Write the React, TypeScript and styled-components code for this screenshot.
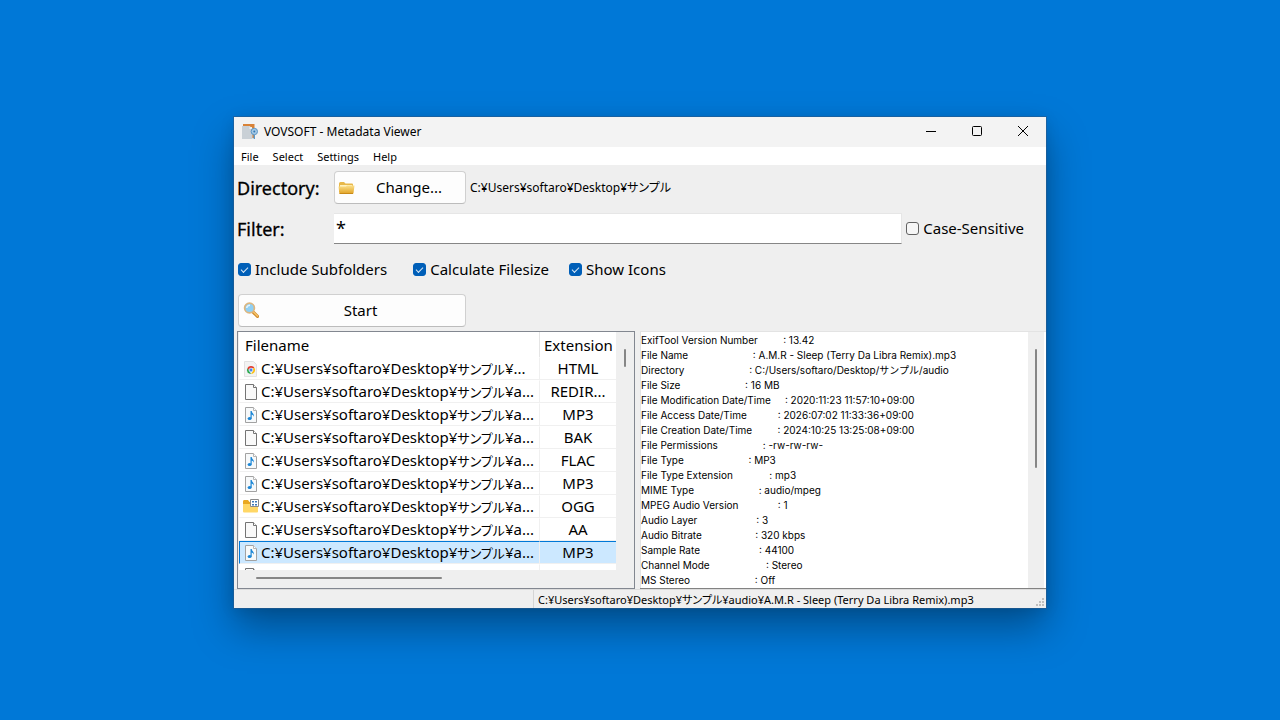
import React from "react";
import styled, { createGlobalStyle } from "styled-components";

const UI = `"Noto Sans", "Noto Sans CJK JP", sans-serif`;
const MEMO = `Inter, "Noto Sans CJK JP", sans-serif`;

const GlobalStyle = createGlobalStyle`
  *, *::before, *::after { box-sizing: border-box; }
  body { margin: 0; background: #0078d7; color: #000; }
  button, input, textarea { font: inherit; color: inherit; margin: 0; }
  svg { flex: none; }
`;

const Desktop = styled.div`
  min-height: 100vh;
  display: flex;
  padding: 117px 234px 112px;
  background: #0078d7;
`;

const AppWindow = styled.main`
  flex: 1;
  min-width: 0;
  display: flex;
  flex-direction: column;
  background: #efefef;
  font: 15px/22px ${UI};
  font-feature-settings: "palt";
  box-shadow: 0 0 0 1px rgba(40, 90, 140, 0.6), 0 20px 38px rgba(0, 0, 0, 0.34),
    0 2px 14px rgba(0, 0, 0, 0.1);
`;

const TitleBar = styled.header`
  display: flex;
  align-items: center;
  height: 30px;
  padding-left: 8px;
  background: #f3f3f3;
  font-size: 12px;
  line-height: 16px;
`;

const Title = styled.h1`
  flex: 1;
  margin: 0 0 0 6px;
  font: inherit;
`;

const CaptionButton = styled.button`
  display: grid;
  place-items: center;
  width: 46px;
  height: 30px;
  padding: 0 0 2px;
  border: 0;
  background: none;
`;

const MenuBar = styled.nav`
  display: flex;
  height: 18px;
  background: #fff;
  font-size: 11px;
  line-height: 20px;
`;

const MenuItem = styled.button`
  padding: 0 7px;
  border: 0;
  background: none;
`;

const Form = styled.form`
  display: flex;
  flex-direction: column;
  padding: 6px 4px 4px 3px;
`;

const Row = styled.div<{ $height?: number }>`
  display: flex;
  align-items: center;
  height: ${(p) => p.$height ?? 33}px;
`;

const IndentedRow = styled(Row)`
  padding-left: 1px;
  & + & {
    margin-top: 8px;
  }
`;

const FieldLabel = styled.label`
  width: 97px;
  font-size: 18px;
  -webkit-text-stroke: 0.3px #000;
`;

const PushButton = styled.button<{ $width: number }>`
  display: flex;
  align-items: center;
  width: ${(p) => p.$width}px;
  height: 33px;
  padding: 0 3px;
  border: 1px solid #d0d0d0;
  border-bottom-color: #bcbcbc;
  border-radius: 4px;
  background: #fdfdfd;
`;

const ButtonText = styled.span`
  flex: 1;
  padding-bottom: 2px;
  text-align: center;
`;

const PathText = styled.output`
  margin-left: 4px;
  font-size: 12px;
`;

const FilterInput = styled.input`
  flex: 1;
  min-width: 0;
  height: 31px;
  padding: 0 2px 2px;
  border: 1px solid #e6e6e6;
  border-width: 1px 1px 1px 0;
  border-bottom-color: #868686;
  background: #fff;
  outline: 0;
  font-size: 18px;
`;

const Check = styled.label<{ $before?: number; $after?: number }>`
  display: flex;
  align-items: center;
  gap: 4px;
  margin-left: ${(p) => p.$before ?? 0}px;
  margin-right: ${(p) => p.$after ?? 0}px;
`;

const CheckText = styled.span`
  padding-bottom: 2px;
`;

const CheckBox = styled.input.attrs({ type: "checkbox" })`
  appearance: none;
  display: grid;
  place-items: center;
  width: 13px;
  height: 13px;
  border: 1px solid #626262;
  border-radius: 3px;
  background: #f6f6f6;
  &:checked {
    border-color: #005fb8;
    background: #005fb8;
  }
  &:checked::after {
    content: "";
    width: 7px;
    height: 4px;
    border: solid #d8e8f6;
    border-width: 0 0 1px 1px;
    transform: translateY(-1px) rotate(-45deg);
  }
`;

const Panes = styled.section`
  flex: 1;
  min-height: 0;
  display: grid;
  grid-template-columns: minmax(0, 398fr) minmax(0, 406fr);
  gap: 5px;
  padding-left: 3px;
`;

const ListView = styled.div`
  display: grid;
  grid-template: minmax(0, 1fr) 18px / minmax(0, 1fr) 18px;
  height: 258px;
  padding-left: 1px;
  border: 1px solid #828790;
  background: #efefef;
`;

const ListBody = styled.div`
  overflow: hidden;
  background: #fff;
`;

const FileTable = styled.table`
  width: 100%;
  table-layout: fixed;
  border-collapse: separate;
  border-spacing: 0;
`;

const HeadCell = styled.th<{ $width?: number }>`
  width: ${(p) => (p.$width ? `${p.$width}px` : "auto")};
  height: 25px;
  padding: ${(p) => (p.$width ? "0 0 0 4px" : "0 0 0 6px")};
  border-right: ${(p) => (p.$width ? 0 : "1px solid #e5e5e5")};
  font-weight: 400;
  text-align: left;
  white-space: nowrap;
`;

const FileRow = styled.tr<{ $selected: boolean }>`
  background: ${(p) => (p.$selected ? "#cce8ff" : "#fff")};
  td {
    border-top: 1px solid ${(p) => (p.$selected ? "#0078d7" : "transparent")};
    border-bottom: 1px solid #f0f0f0;
  }
  td:first-child {
    border-left: 1px solid ${(p) => (p.$selected ? "#0078d7" : "transparent")};
  }
`;

const NameCell = styled.td`
  height: 23px;
  padding: 0;
  border-right: 1px solid #f0f0f0;
  overflow: hidden;
`;

const NameContent = styled.div`
  display: flex;
  align-items: center;
  gap: 2px;
  height: 21px;
  padding-left: 3px;
  line-height: 21px;
  white-space: nowrap;
`;

const Kana = styled.span`
  font-size: 13px;
  line-height: 0;
`;

const ExtCell = styled.td`
  height: 23px;
  padding: 0;
  line-height: 21px;
  text-align: center;
`;

const ScrollTrack = styled.div<{ $vertical?: boolean }>`
  display: flex;
  flex-direction: ${(p) => (p.$vertical ? "column" : "row")};
  align-items: center;
  padding: ${(p) => (p.$vertical ? "17px 1px 0 0" : "0 0 2px 17px")};
  background: #efefef;
`;

const Thumb = styled.span<{ $vertical?: boolean; $length: number }>`
  width: ${(p) => (p.$vertical ? 2 : p.$length)}px;
  height: ${(p) => (p.$vertical ? p.$length : 2)}px;
  border-radius: 1px;
  background: #868686;
`;

const MemoBox = styled.div`
  display: grid;
  grid-template-columns: minmax(0, 1fr) 16px;
  height: 258px;
  padding-right: 2px;
  border-top: 1px solid #e3e3e3;
  border-bottom: 1px solid #828282;
  background: #fff;
`;

const Memo = styled.textarea`
  display: block;
  width: 100%;
  height: 100%;
  padding: 1px 0 0;
  border: 0;
  border-left: 1px solid #e3e3e3;
  outline: 0;
  resize: none;
  overflow: hidden;
  white-space: pre;
  background: #fff;
  font: 10px/15px ${MEMO};
`;

const StatusBar = styled.footer`
  display: flex;
  height: 19px;
  border-top: 1px solid #dcdcdc;
  font-size: 11px;
  line-height: 20px;
`;

const StatusPanel = styled.span`
  flex: 0 0 300px;
  border-right: 1px solid #d5d5d5;
`;

const StatusText = styled.span`
  flex: 1;
  padding-left: 4px;
  white-space: nowrap;
`;

const Grip = styled.svg`
  align-self: flex-end;
  margin: 0 1px 1px 0;
`;

const AppLogo = () => (
  <svg width="16" height="16" viewBox="0 0 16 16" aria-hidden="true">
    <path d="M1 0h11.500v14H10V3H1z" fill="#d98338" />
    <path d="M0 2h7.500l3 3v10H0z" fill="#c9d0d6" />
    <path d="M7.500 2l3 3h-3z" fill="#eef0f1" />
    <circle cx="12.300" cy="7.500" r="3.200" fill="#a5c8e4" stroke="#5b97c8" />
    <circle cx="12.300" cy="7.500" r="1" fill="#3478b4" />
    <path d="M12.300 11v4" stroke="#5b97c8" strokeWidth="1.400" />
  </svg>
);

const FolderIcon = () => (
  <svg width="18" height="16" viewBox="0 0 18 16" aria-hidden="true">
    <defs>
      <linearGradient id="folder" x1="0" y1="0" x2="0" y2="1">
        <stop offset="0" stopColor="#fbe08c" />
        <stop offset="1" stopColor="#e0a020" />
      </linearGradient>
    </defs>
    <path d="M1 3.500Q1 2 2.500 2H6l1.500 1.500H14q1 0 1 1V12H1z" fill="#e8b84a" />
    <path d="M2 5h12v3H2z" fill="#fff1bd" />
    <path d="M.5 6.500H8l1-1h7.500L15.500 13q-.2 1-1 1h-12q-1 0-1.200-1z" fill="url(#folder)" />
    <path d="M1.500 13.500h13.500" stroke="#c98a18" />
  </svg>
);

const SearchIcon = () => (
  <svg width="17" height="17" viewBox="0 0 17 17" aria-hidden="true">
    <path d="M11.500 10.500l4 3.800" stroke="#d08a2c" strokeWidth="3.200" strokeLinecap="round" />
    <path d="M11.500 10l4 4" stroke="#f7c56a" strokeWidth="1.500" strokeLinecap="round" />
    <circle cx="7.500" cy="6" r="4.900" fill="#8fd0f5" stroke="#dcb680" strokeWidth="1.700" />
    <path d="M4.700 6Q5 3.300 8 3.200" stroke="#dff3ff" strokeWidth="1.500" fill="none" />
  </svg>
);

type IconKind = "html" | "blank" | "audio" | "ogg";

const FileIcon = ({ kind }: { kind: IconKind }) => {
  if (kind === "ogg")
    return (
      <svg width="16" height="16" viewBox="0 0 16 16" aria-hidden="true">
        <path d="M0 2.500Q0 1 1 1h4l1.500 2H15v9H0z" fill="#e9a820" />
        <path d="M0 5h15v7.500q0 1-1 1H1q-1 0-1-1z" fill="#ffd766" />
        <path d="M7.500 .5h8v7h-8z" fill="#fff" stroke="#8a8a8a" />
        <path d="M9 2h2v1.500H9zM12 2h2v1.500h-2zM9 5h2v1.500H9zM12 5h2v1.500h-2z" fill="#3c78b8" />
      </svg>
    );
  if (kind === "html")
    return (
      <svg width="16" height="16" viewBox="0 0 16 16" aria-hidden="true">
        <path d="M1.500 .5h9l3 3v12h-12z" fill="#f3f3f3" stroke="#e2e2e2" />
        <path d="M8 5a4 4 0 0 1 3.700 2.300H8L5.500 9 4.300 7.300A4 4 0 0 1 8 5z" fill="#e33b2e" />
        <path d="M4.300 7.300L7 11l1 2a4 4 0 0 1-3.700-5.700z" fill="#2da94f" />
        <path d="M11.700 7.300A4 4 0 0 1 8 13l2-3.500V7.300z" fill="#fbc116" />
        <circle cx="8" cy="9" r="1.900" fill="#4285f4" stroke="#fff" strokeWidth=".6" />
      </svg>
    );
  const audio = kind === "audio";
  return (
    <svg width="16" height="16" viewBox="0 0 16 16" aria-hidden="true">
      <path
        d="M2.500 .5h8l3 3v12h-11z"
        fill={audio ? "#f7f9fa" : "#f9f9f9"}
        stroke={audio ? "#a2a2a2" : "#747474"}
      />
      <path d="M10.500 .5v3h3" fill="#fff" stroke={audio ? "#b5b5b5" : "#747474"} />
      {audio && (
        <g fill="#1a86d6">
          <ellipse cx="6.600" cy="11.500" rx="2" ry="1.600" />
          <path d="M7.500 4h1.200q.3 1.800 1.500 2.700 1.200 1.100.2 3.100.1-1.700-1.700-2.300v4H7.500z" />
        </g>
      )}
    </svg>
  );
};

const files: { icon: IconKind; tail: string; ext: string; selected?: boolean }[] = [
  { icon: "html", tail: "...", ext: "HTML" },
  { icon: "blank", tail: "a...", ext: "REDIR..." },
  { icon: "audio", tail: "a...", ext: "MP3" },
  { icon: "blank", tail: "a...", ext: "BAK" },
  { icon: "audio", tail: "a...", ext: "FLAC" },
  { icon: "audio", tail: "a...", ext: "MP3" },
  { icon: "ogg", tail: "a...", ext: "OGG" },
  { icon: "blank", tail: "a...", ext: "AA" },
  { icon: "audio", tail: "a...", ext: "MP3", selected: true },
  { icon: "blank", tail: "a...", ext: "" },
];

const metadata: [string, string][] = [
  ["ExifTool Version Number", "13.42"],
  ["File Name", "A.M.R - Sleep (Terry Da Libra Remix).mp3"],
  ["Directory", "C:/Users/softaro/Desktop/サンプル/audio"],
  ["File Size", "16 MB"],
  ["File Modification Date/Time", "2020:11:23 11:57:10+09:00"],
  ["File Access Date/Time", "2026:07:02 11:33:36+09:00"],
  ["File Creation Date/Time", "2024:10:25 13:25:08+09:00"],
  ["File Permissions", "-rw-rw-rw-"],
  ["File Type", "MP3"],
  ["File Type Extension", "mp3"],
  ["MIME Type", "audio/mpeg"],
  ["MPEG Audio Version", "1"],
  ["Audio Layer", "3"],
  ["Audio Bitrate", "320 kbps"],
  ["Sample Rate", "44100"],
  ["Channel Mode", "Stereo"],
  ["MS Stereo", "Off"],
];

const report = metadata.map(([key, value]) => `${key.padEnd(32)}: ${value}`).join("\n");

export default function App() {
  return (
    <Desktop>
      <GlobalStyle />
      <AppWindow>
        <TitleBar>
          <AppLogo />
          <Title>VOVSOFT - Metadata Viewer</Title>
          <CaptionButton aria-label="Minimize">
            <svg width="10" height="10" viewBox="0 0 10 10">
              <path d="M0 5.500h10" stroke="#000" />
            </svg>
          </CaptionButton>
          <CaptionButton aria-label="Maximize">
            <svg width="10" height="10" viewBox="0 0 10 10">
              <rect x=".5" y=".5" width="9" height="9" rx="1" fill="none" stroke="#000" />
            </svg>
          </CaptionButton>
          <CaptionButton aria-label="Close">
            <svg width="10" height="10" viewBox="0 0 10 10">
              <path d="M0 0l10 10M10 0L0 10" stroke="#000" />
            </svg>
          </CaptionButton>
        </TitleBar>
        <MenuBar>
          {["File", "Select", "Settings", "Help"].map((m) => (
            <MenuItem key={m}>{m}</MenuItem>
          ))}
        </MenuBar>
        <Form onSubmit={(e) => e.preventDefault()}>
          <Row>
            <FieldLabel htmlFor="change">Directory:</FieldLabel>
            <PushButton id="change" type="button" $width={132}>
              <FolderIcon />
              <ButtonText>Change...</ButtonText>
            </PushButton>
            <PathText>C:¥Users¥softaro¥Desktop¥サンプル</PathText>
          </Row>
          <Row $height={49}>
            <FieldLabel htmlFor="filter">Filter:</FieldLabel>
            <FilterInput id="filter" defaultValue="*" />
            <Check $before={4} $after={18}>
              <CheckBox />
              <CheckText>Case-Sensitive</CheckText>
            </Check>
          </Row>
          <IndentedRow>
            <Check $after={26}>
              <CheckBox defaultChecked />
              <CheckText>Include Subfolders</CheckText>
            </Check>
            <Check $after={20}>
              <CheckBox defaultChecked />
              <CheckText>Calculate Filesize</CheckText>
            </Check>
            <Check>
              <CheckBox defaultChecked />
              <CheckText>Show Icons</CheckText>
            </Check>
          </IndentedRow>
          <IndentedRow>
            <PushButton type="submit" $width={228}>
              <SearchIcon />
              <ButtonText>Start</ButtonText>
            </PushButton>
          </IndentedRow>
        </Form>
        <Panes>
          <ListView>
            <ListBody>
              <FileTable>
                <thead>
                  <tr>
                    <HeadCell>Filename</HeadCell>
                    <HeadCell $width={76}>Extension</HeadCell>
                  </tr>
                </thead>
                <tbody>
                  {files.map((f, i) => (
                    <FileRow key={i} $selected={!!f.selected}>
                      <NameCell>
                        <NameContent>
                          <FileIcon kind={f.icon} />
                          <span>
                            C:¥Users¥softaro¥Desktop¥<Kana>サンプル</Kana>¥{f.tail}
                          </span>
                        </NameContent>
                      </NameCell>
                      <ExtCell>{f.ext}</ExtCell>
                    </FileRow>
                  ))}
                </tbody>
              </FileTable>
            </ListBody>
            <ScrollTrack $vertical>
              <Thumb $vertical $length={18} />
            </ScrollTrack>
            <ScrollTrack>
              <Thumb $length={186} />
            </ScrollTrack>
          </ListView>
          <MemoBox>
            <Memo aria-label="Metadata" readOnly spellCheck={false} value={report} />
            <ScrollTrack $vertical>
              <Thumb $vertical $length={119} />
            </ScrollTrack>
          </MemoBox>
        </Panes>
        <StatusBar>
          <StatusPanel />
          <StatusText>
            C:¥Users¥softaro¥Desktop¥サンプル¥audio¥A.M.R - Sleep (Terry Da Libra Remix).mp3
          </StatusText>
          <Grip width="9" height="9" viewBox="0 0 9 9" aria-hidden="true">
            <path
              d="M6 0h2v2H6zM3 3h2v2H3zM6 3h2v2H6zM0 6h2v2H0zM3 6h2v2H3zM6 6h2v2H6z"
              fill="#bfbfbf"
            />
          </Grip>
        </StatusBar>
      </AppWindow>
    </Desktop>
  );
}
